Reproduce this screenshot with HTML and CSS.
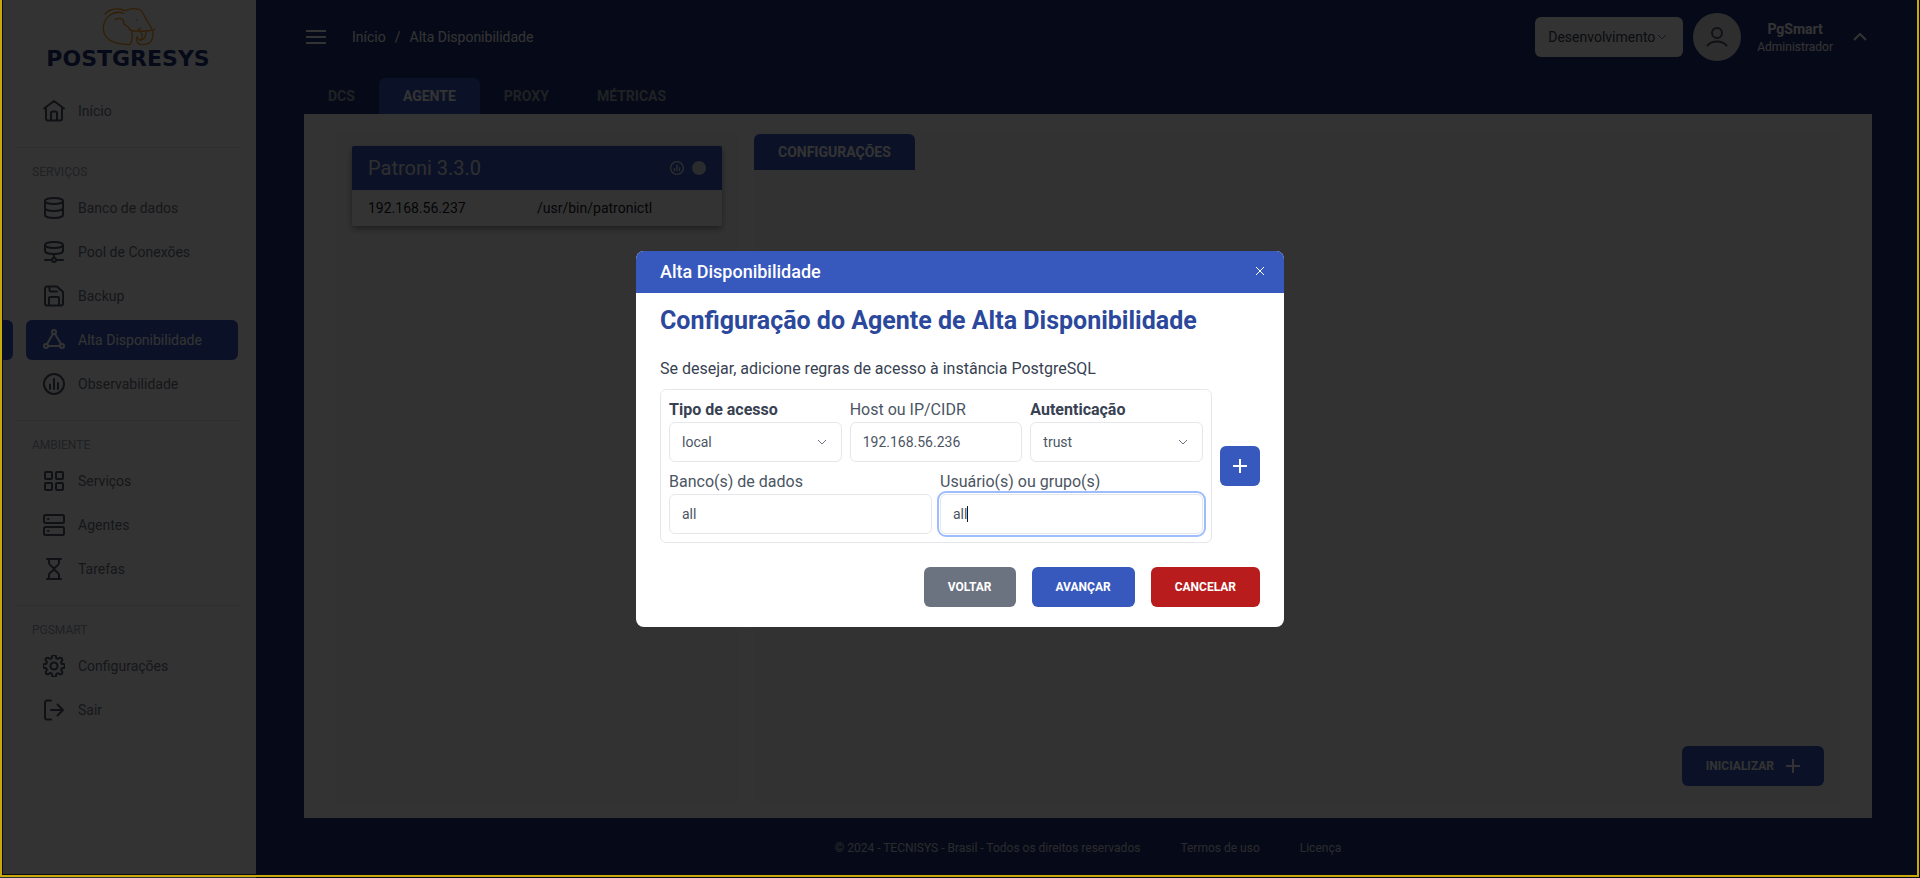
FILE: index.html
```html
<!DOCTYPE html>
<html lang="pt-BR">
<head>
  <meta charset="UTF-8" />
  <meta name="viewport" content="width=device-width, initial-scale=1.0" />
  <title>PgSmart - Alta Disponibilidade</title>
  <link rel="stylesheet" href="styles.css">
</head>
<body>
  <div class="app">
    <aside class="sidebar">
      <a href="#" class="logo">
        <svg class="logo-img" viewBox="300 20 165 120" aria-hidden="true">
          <path d="M312 41C322 27 345 22 366 28" />
          <path d="M368 39C340 28 308 48 307 84C307 118 335 132 387 133C394 120 396 108 392 93" />
          <path d="M366 30C376 34 380 25 398 25C418 25 424 32 431 48C436 62 447 70 452 86" />
          <path d="M342 58C356 50 368 56 368 65C364 76 380 72 384 84C390 96 408 92 419 92C408 92 410 83 419 84" />
          <path d="M419 94C435 88 450 95 461 86" />
          <path d="M456 92C457 119 450 133 426 133C408 133 404 122 408 109C410 120 433 128 435 96" />
          <path d="M419 97C427 104 425 117 417 121" />
          <circle cx="408" cy="60" r="1" />
        </svg>
        <span class="logo-name">POSTGRESYS</span>
      </a>

      <nav class="menu">
        <a href="#" class="item">
          <svg class="icon" viewBox="0 0 22 22"><path d="M1 8.500L11 1l10 7.500M3 7.500V18.500a2 2 0 0 0 2 2H17a2 2 0 0 0 2-2V7.500M8 20.500V13a1.500 1.500 0 0 1 1.500-1.500h3A1.500 1.500 0 0 1 14 13v7.500" /></svg>
          <span>Início</span>
        </a>
      </nav>

      <nav class="menu section">
        <h2 class="section-title">SERVIÇOS</h2>
        <a href="#" class="item">
          <svg class="icon" viewBox="0 0 22 22"><ellipse cx="11" cy="4" rx="9" ry="3" /><path d="M2 4V18c0 1.700 4 3 9 3s9-1.300 9-3V4M2 11c0 1.700 4 3 9 3s9-1.300 9-3" /></svg>
          <span>Banco de dados</span>
        </a>
        <a href="#" class="item">
          <svg class="icon" viewBox="0 0 22 22"><ellipse cx="11" cy="4" rx="9" ry="3" /><path d="M2 4v6c0 1.700 4 3 9 3s9-1.300 9-3V4M11 13v4M2 19h7M13 19h7" /><circle cx="11" cy="19" r="2" /></svg>
          <span>Pool de Conexões</span>
        </a>
        <a href="#" class="item">
          <svg class="icon" viewBox="0 0 22 22"><path d="M4 1.500h10l6 5.500v11.500a2 2 0 0 1-2 2H4a2 2 0 0 1-2-2v-15a2 2 0 0 1 2-2zM6.500 2v3.500a1 1 0 0 0 1 1H14M6 20.500V13a1 1 0 0 1 1-1h8a1 1 0 0 1 1 1v7.500" /></svg>
          <span>Backup</span>
        </a>
        <a href="#" class="item active">
          <svg class="icon" viewBox="0 0 22 22"><circle cx="11" cy="3" r="2" /><circle cx="3" cy="17" r="2" /><circle cx="19" cy="17" r="2" /><path d="M10 5L4 15M12 5l6 10M5 17h12" /></svg>
          <span>Alta Disponibilidade</span>
        </a>
        <a href="#" class="item">
          <svg class="icon" viewBox="0 0 22 22"><circle cx="11" cy="11" r="10" /><path d="M7 11.500v4.500M11 6v10M15 10v6" /></svg>
          <span>Observabilidade</span>
        </a>
      </nav>

      <nav class="menu section">
        <h2 class="section-title">AMBIENTE</h2>
        <a href="#" class="item">
          <svg class="icon" viewBox="0 0 22 22"><rect x="2" y="2" width="7" height="7" rx="1" /><rect x="13" y="2" width="7" height="7" rx="1" /><rect x="2" y="13" width="7" height="7" rx="1" /><rect x="13" y="13" width="7" height="7" rx="1" /></svg>
          <span>Serviços</span>
        </a>
        <a href="#" class="item">
          <svg class="icon" viewBox="0 0 22 22"><rect x="1" y="1" width="20" height="8" rx="1.500" /><rect x="1" y="13" width="20" height="8" rx="1.500" /><path d="M5 5h.5M5 17h.5" /></svg>
          <span>Agentes</span>
        </a>
        <a href="#" class="item">
          <svg class="icon" viewBox="0 0 22 22"><path d="M4 1h14M4 21h14M6 1v4c0 3 5 4 5 6s-5 3-5 6v4M16 1v4c0 3-5 4-5 6s5 3 5 6v4" /></svg>
          <span>Tarefas</span>
        </a>
      </nav>

      <nav class="menu section">
        <h2 class="section-title">PGSMART</h2>
        <a href="#" class="item">
          <svg class="icon" viewBox="1 1 22 22"><path d="M19.400 15a1.650 1.650 0 0 0 .33 1.820l.06.06a2 2 0 1 1-2.830 2.830l-.06-.06a1.650 1.650 0 0 0-2.800 1.170V21a2 2 0 0 1-4 0v-.09a1.650 1.650 0 0 0-2.900-1.260l-.06.06a2 2 0 1 1-2.830-2.830l.06-.06A1.650 1.650 0 0 0 3.090 14H3a2 2 0 0 1 0-4h.09a1.650 1.650 0 0 0 1.260-2.820l-.06-.06a2 2 0 1 1 2.830-2.830l.06.06A1.650 1.650 0 0 0 10 3.090V3a2 2 0 0 1 4 0v.09a1.650 1.650 0 0 0 2.820 1.260l.06-.06a2 2 0 1 1 2.830 2.830l-.06.06A1.650 1.650 0 0 0 20.910 10H21a2 2 0 0 1 0 4h-.09a1.650 1.650 0 0 0-1.510 1z" /><circle cx="12" cy="12" r="3.500" /></svg>
          <span>Configurações</span>
        </a>
        <a href="#" class="item">
          <svg class="icon" viewBox="0 0 22 22"><path d="M8 1.500H4a2 2 0 0 0-2 2v15a2 2 0 0 0 2 2h4M8 11h12M14.500 5.500L20 11l-5.500 5.500" /></svg>
          <span>Sair</span>
        </a>
      </nav>
    </aside>

    <div class="main">
      <header class="topbar">
        <button type="button" class="btn-menu" aria-label="Menu">
          <svg width="20" height="16" viewBox="0 0 20 16"><path d="M0 2h20M0 8h20M0 14h20" /></svg>
        </button>
        <div class="breadcrumb">
          <a href="#">Início</a><span>/</span><a href="#">Alta Disponibilidade</a>
        </div>
        <div class="env">
          <select class="env-select" aria-label="Ambiente">
            <option>Desenvolvimento</option>
          </select>
          <svg class="env-arrow" width="10" height="6" viewBox="0 0 10 6"><path d="M1 1l4 4 4-4" /></svg>
        </div>
        <div class="user">
          <span class="avatar">
            <svg width="24" height="24" viewBox="0 0 24 24"><circle cx="12" cy="8" r="5" /><path d="M2 21c5-6 15-6 20 0" /></svg>
          </span>
          <span class="user-info"><strong>PgSmart</strong><small>Administrador</small></span>
          <button type="button" class="btn-user" aria-label="Conta">
            <svg width="14" height="8" viewBox="0 0 14 8"><path d="M1 7l6-6 6 6" /></svg>
          </button>
        </div>
      </header>

      <div class="tabs">
        <button type="button" class="tab">DCS</button>
        <button type="button" class="tab current">AGENTE</button>
        <button type="button" class="tab">PROXY</button>
        <button type="button" class="tab">MÉTRICAS</button>
      </div>

      <main class="panel">
        <div class="agents">
          <section class="card">
            <h3 class="card-head">
              <span>Patroni 3.3.0</span>
              <svg class="card-chart" viewBox="0 0 22 22"><circle cx="11" cy="11" r="10" /><path d="M7 11v5M11 6v10M15 10v6" /></svg>
              <i class="status"></i>
            </h3>
            <div class="card-row">
              <span>192.168.56.237</span>
              <span>/usr/bin/patronictl</span>
            </div>
          </section>
        </div>
        <div class="details">
          <button type="button" class="tab current">CONFIGURAÇÕES</button>
          <button type="button" class="btn btn-start">INICIALIZAR
            <svg width="14" height="14" viewBox="0 0 14 14"><path d="M7 0v14M0 7h14" /></svg>
          </button>
        </div>
      </main>

      <footer class="footer">
        <span>© 2024 - TECNISYS - Brasil - Todos os direitos reservados</span>
        <a href="#">Termos de uso</a>
        <a href="#">Licença</a>
      </footer>
    </div>
  </div>

  <div class="overlay">
    <form class="modal" role="dialog" aria-labelledby="modal-title">
      <div class="modal-head">
        <h2 id="modal-title">Alta Disponibilidade</h2>
        <button type="button" class="btn-close" aria-label="Fechar">
          <svg width="12" height="12" viewBox="0 0 12 12"><path d="M2 2l8 8M10 2l-8 8" /></svg>
        </button>
      </div>
      <div class="modal-body">
        <h1>Configuração do Agente de Alta Disponibilidade</h1>
        <p>Se desejar, adicione regras de acesso à instância PostgreSQL</p>
        <div class="rules">
          <div class="rule">
            <div class="field third">
              <label for="tipo" class="required">Tipo de acesso</label>
              <div class="control">
                <select id="tipo"><option>local</option></select>
                <svg class="arrow" width="10" height="6" viewBox="0 0 10 6"><path d="M1 1l4 4 4-4" /></svg>
              </div>
            </div>
            <div class="field third">
              <label for="host">Host ou IP/CIDR</label>
              <div class="control"><input id="host" type="text" value="192.168.56.236"></div>
            </div>
            <div class="field third">
              <label for="auth" class="required">Autenticação</label>
              <div class="control">
                <select id="auth"><option>trust</option></select>
                <svg class="arrow" width="10" height="6" viewBox="0 0 10 6"><path d="M1 1l4 4 4-4" /></svg>
              </div>
            </div>
            <div class="field half">
              <label for="banco">Banco(s) de dados</label>
              <div class="control"><input id="banco" type="text" value="all"></div>
            </div>
            <div class="field half">
              <label for="usuario">Usuário(s) ou grupo(s)</label>
              <div class="control focused"><input id="usuario" type="text" value="all"><span class="caret"></span></div>
            </div>
          </div>
          <button type="button" class="btn-add" aria-label="Adicionar regra">
            <svg width="14" height="14" viewBox="0 0 14 14"><path d="M7 0v14M0 7h14" /></svg>
          </button>
        </div>
        <div class="actions">
          <button type="button" class="btn btn-back">VOLTAR</button>
          <button type="button" class="btn">AVANÇAR</button>
          <button type="button" class="btn btn-cancel">CANCELAR</button>
        </div>
      </div>
    </form>
  </div>
  <div class="frame"></div>
</body>
</html>
```

FILE: styles.css
```css
* {
  margin: 0;
  padding: 0;
  box-sizing: border-box;
}
html, body {
  height: 100%;
  overflow: hidden;
}
body {
  background: #1e327a;
  font-family: Roboto, "Liberation Sans", sans-serif;
  font-size: 14px;
  line-height: 20px;
  color: #374151;
}
a {
  color: inherit;
  text-decoration: none;
}
button, input, select {
  font: inherit;
  color: inherit;
  border: 0;
  background: none;
}
svg {
  display: block;
  fill: none;
  stroke: currentColor;
}
.app {
  display: flex;
  min-height: 100vh;
}

/* menu lateral */
.sidebar {
  width: 256px;
  flex-shrink: 0;
  background: #fff;
}
.logo {
  display: flex;
  flex-direction: column;
  align-items: center;
  height: 91px;
  padding-top: 7px;
  color: #1e327a;
}
.logo-img {
  width: 55px;
  height: 40px;
  stroke: #f39a1d;
  stroke-width: 4;
  stroke-linecap: round;
  stroke-linejoin: round;
}
.logo-name {
  font-family: "DejaVu Sans", sans-serif;
  font-size: 22px;
  font-weight: bold;
  line-height: 24px;
}
.menu {
  display: flex;
  flex-direction: column;
  gap: 4px;
  margin: 0 16px 16px;
}
.section {
  padding-top: 16px;
  border-top: 1px solid #e5e7eb;
}
.section-title {
  padding-left: 16px;
  margin-bottom: 4px;
  font-size: 12px;
  font-weight: 400;
  line-height: 16px;
  color: #9ca3af;
}
.item {
  position: relative;
  display: flex;
  align-items: center;
  gap: 13px;
  height: 40px;
  margin: 0 2px 0 10px;
  padding-left: 17px;
  border-radius: 6px;
  color: #6b7280;
}
.icon {
  width: 22px;
  height: 22px;
  stroke-width: 2;
  stroke-linecap: round;
  stroke-linejoin: round;
}
.sidebar .icon {
  color: #4b5563;
}
.item.active,
.sidebar .active .icon {
  color: #fff;
}
.item.active {
  background: #3758bd;
}
/* marcador na borda da tela */
.item.active::before {
  content: "";
  position: absolute;
  left: -26px;
  width: 13px;
  height: 40px;
  border-radius: 0 6px 6px 0;
  background: #3758bd;
}

/* conteudo */
.main {
  flex: 1;
  display: flex;
  flex-direction: column;
  padding: 0 48px;
}
.topbar {
  display: flex;
  align-items: center;
  height: 74px;
  color: #fff;
}
.btn-menu {
  margin: 0 26px 0 2px;
}
.btn-menu svg,
.btn-user svg {
  stroke-width: 2;
}
.breadcrumb {
  display: flex;
  flex: 1;
  gap: 9px;
}
.env {
  position: relative;
}
.env-select {
  appearance: none;
  width: 148px;
  height: 40px;
  padding: 0 13px;
  border-radius: 6px;
  background: #fff;
  color: #374151;
}
.env-arrow {
  position: absolute;
  right: 16px;
  top: 17px;
  color: #6b7280;
}
.user {
  display: flex;
  align-items: center;
  margin-left: 10px;
}
.avatar {
  display: grid;
  place-items: center;
  width: 48px;
  height: 48px;
  margin-right: 16px;
  border-radius: 50%;
  background: #e5e7eb;
  color: #4b5563;
}
.avatar svg {
  stroke-width: 2;
}
.user-info {
  display: flex;
  flex-direction: column;
  align-items: center;
}
.user-info small {
  font-size: 12px;
  line-height: 16px;
}
.btn-user {
  margin: 0 5px 0 20px;
}
.tabs {
  display: flex;
  margin-top: 4px;
}
.tab {
  height: 36px;
  padding: 0 24px;
  font-weight: 700;
  color: #9ca3af;
}
.tab.current {
  border-radius: 6px 6px 0 0;
  background: #3758bd;
  color: #fff;
}
.panel {
  flex: 1;
  display: flex;
  gap: 16px;
  padding: 16px 32px;
  background: #fff;
}
.agents {
  width: 402px;
  padding: 16px;
  background: #fafafa;
}
.details {
  flex: 1;
  display: flex;
  flex-direction: column;
  justify-content: space-between;
  align-items: flex-start;
  padding: 4px 16px 16px 0;
  background: #fafafa;
}
.card {
  border-radius: 2px;
  background: #fff;
  box-shadow: 0 3px 6px rgba(0, 0, 0, 0.4);
}
.card-head {
  display: flex;
  align-items: center;
  gap: 8px;
  height: 44px;
  padding: 0 16px;
  border-radius: 2px 2px 0 0;
  background: #3758bd;
  color: #e5e7eb;
  font-size: 20px;
  font-weight: 400;
}
.card-head span {
  flex: 1;
}
.card-chart {
  width: 14px;
  height: 14px;
  stroke-width: 2;
}
.status {
  width: 14px;
  height: 14px;
  border-radius: 50%;
  background: #d1d5db;
}
.card-row {
  display: grid;
  grid-template-columns: 1fr 1fr;
  padding: 8px 16px;
  color: #111827;
}
.footer {
  display: flex;
  justify-content: center;
  align-items: center;
  gap: 40px;
  height: 60px;
  font-size: 12px;
  color: #d1d5db;
}
.btn {
  display: flex;
  align-items: center;
  height: 40px;
  padding: 0 24px;
  border-radius: 6px;
  background: #3758bd;
  color: #fff;
  font-size: 12px;
  font-weight: 700;
}
.btn svg,
.btn-add svg {
  stroke-width: 2;
}
.btn-start {
  align-self: flex-end;
  gap: 12px;
}

/* modal */
.overlay {
  position: fixed;
  inset: 0;
  display: flex;
  justify-content: center;
  align-items: center;
  background: rgba(0, 0, 0, 0.8);
}
.modal {
  width: 648px;
  border-radius: 8px;
  overflow: hidden;
  background: #fff;
}
.modal-head {
  display: flex;
  justify-content: space-between;
  align-items: center;
  height: 42px;
  padding: 0 18px 0 24px;
  background: #3758bd;
  color: #fff;
}
.modal-head h2 {
  font-size: 18px;
  font-weight: 500;
}
.btn-close {
  padding-bottom: 2px;
}
.modal-body {
  padding: 12px 24px 20px;
  font-size: 16px;
  line-height: 24px;
}
.modal-body h1 {
  margin-bottom: 20px;
  font-size: 25px;
  font-weight: 700;
  line-height: 32px;
  color: #2b489c;
}
.modal-body p {
  margin-bottom: 8px;
}
.rules {
  display: flex;
  align-items: center;
  gap: 8px;
}
.rule {
  flex: 1;
  display: grid;
  grid-template-columns: repeat(6, 1fr);
  gap: 8px;
  padding: 8px;
  border: 1px solid #e5e7eb;
  border-radius: 6px;
}
.field {
  display: flex;
  flex-direction: column;
  color: #4b5563;
}
.third {
  grid-column: span 2;
}
.half {
  grid-column: span 3;
}
.required {
  font-weight: 700;
  color: #374151;
}
.control {
  position: relative;
}
.control input,
.control select {
  appearance: none;
  display: block;
  width: 100%;
  height: 40px;
  padding: 0 12px;
  border: 1px solid #e5e7eb;
  border-radius: 6px;
  background: #fff;
  font-size: 14px;
}
.arrow {
  position: absolute;
  top: 17px;
  right: 15px;
  color: #6b7280;
}
.focused input {
  outline: 2px solid #9dbdfc;
  outline-offset: 1px;
}
.caret {
  position: absolute;
  top: 12px;
  left: 27px;
  width: 1px;
  height: 16px;
  background: #111827;
}
.btn-add {
  display: grid;
  place-items: center;
  width: 40px;
  height: 40px;
  border-radius: 6px;
  background: #3758bd;
  color: #fff;
}
.actions {
  display: flex;
  justify-content: flex-end;
  gap: 16px;
  margin-top: 24px;
}
.btn-back {
  background: #6b7280;
}
.btn-cancel {
  background: #b91c1c;
}

/* moldura da janela */
.frame {
  position: fixed;
  inset: 0 1px 1px 0;
  border: 2px solid #c8a90c;
  border-top: 0;
  box-shadow: inset 1px -1px #0a0a1a;
  pointer-events: none;
}
```
